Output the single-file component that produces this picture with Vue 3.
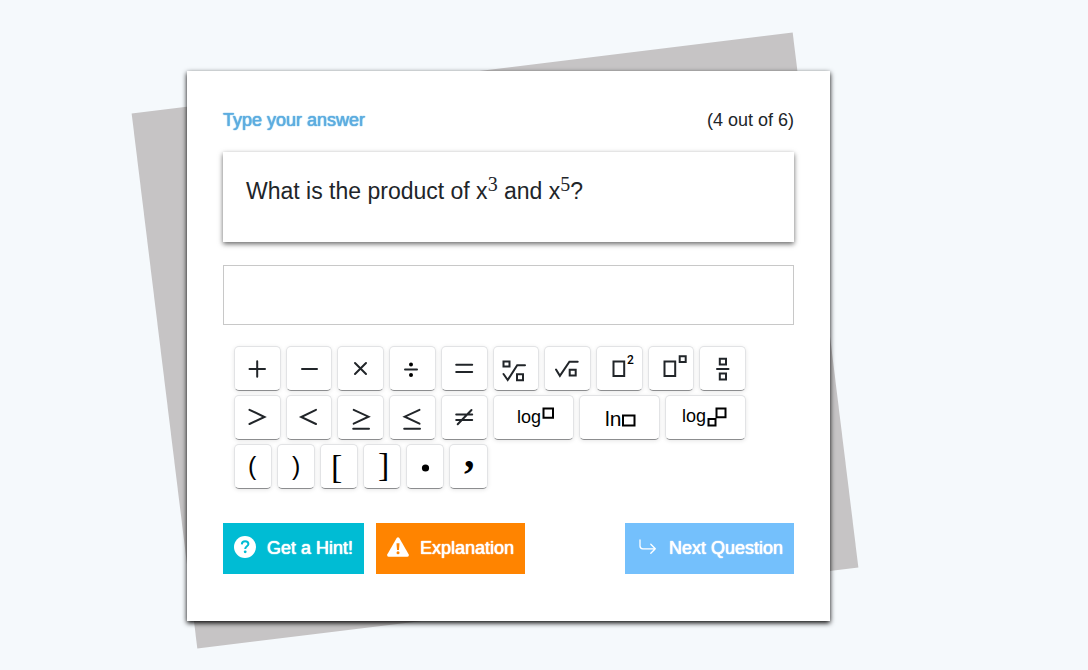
<template>
  <main class="page">
    <section class="card">
      <div class="sheet">
        <header class="head">
          <label for="answer" class="title">Type your answer</label>
          <span class="counter">(4 out of 6)</span>
        </header>

        <div class="question">
          What is the product of x<sup>3</sup> and x<sup>5</sup>?
        </div>

        <input id="answer" v-model="answer" class="answer" type="text" autocomplete="off" />

        <div class="keyboard">
          <div class="row" v-for="(row, index) in rows" :key="index">
            <button
              v-for="key in row"
              :key="key.name"
              type="button"
              class="key"
              :class="key.size"
              :aria-label="key.name"
              @click="answer += key.value"
            >
              <svg :width="widths[key.size]" height="44" :viewBox="`1 1 ${widths[key.size]} 44`">
                <path v-if="key.d" :d="key.d" />
                <circle v-for="(dot, i) in key.dots" :key="i" :cx="dot[0]" :cy="dot[1]" :r="dot[2]" />
                <text v-if="key.text" :x="key.x" :y="key.y" :class="key.font">{{ key.text }}</text>
              </svg>
            </button>
          </div>
        </div>

        <footer class="actions">
          <button type="button" class="btn hint">
            <svg width="22" height="22" viewBox="0 0 22 22">
              <circle cx="11" cy="11" r="11" fill="#fff" />
              <path d="M7.8 8.4C7.9 6.3 9.3 5.2 11.1 5.2C13.1 5.2 14.4 6.4 14.4 8C14.4 10.3 11.2 10.2 11.2 13" fill="none" stroke="#00bcd4" stroke-width="2" />
              <circle cx="11.2" cy="15.8" r="1.4" fill="#00bcd4" />
            </svg>
            <span>Get a Hint!</span>
          </button>
          <button type="button" class="btn explain">
            <svg width="22" height="22" viewBox="0 0 22 22">
              <path d="M9.7 2.1Q11 .3 12.3 2.1L21.6 18.3Q22.4 20.6 20.3 20.7H1.7Q-.4 20.6 .4 18.3Z" fill="#fff" />
              <path d="M9.5 7.3H12.5L12 14.1H10Z" fill="#ff8400" />
              <circle cx="11" cy="16.8" r="1.5" fill="#ff8400" />
            </svg>
            <span>Explanation</span>
          </button>
          <button type="button" class="btn next">
            <svg width="22" height="22" viewBox="0 0 22 22">
              <path d="M4 4V10Q4 12.8 6.8 12.8H19.3M14.8 8.3L19.3 12.8L14.8 17.3" fill="none" stroke="#fff" stroke-width="1.3" stroke-linecap="round" stroke-linejoin="round" />
            </svg>
            <span>Next Question</span>
          </button>
        </footer>
      </div>
    </section>
  </main>
</template>

<script setup>
import { ref } from "vue";

const answer = ref("");

const widths = { normal: 46, wide: 80, small: 38 };

const rows = [
  [
    { name: "plus", value: "+", size: "normal", d: "M16.5 23H32M24.2 15.3V30.7" },
    { name: "minus", value: "−", size: "normal", d: "M17 23H32" },
    { name: "times", value: "×", size: "normal", d: "M18 17L29 28M29 17L18 28" },
    { name: "divide", value: "÷", size: "normal", d: "M17 23.5H29", dots: [[23, 18.5, 2], [23, 29, 2]] },
    { name: "equals", value: "=", size: "normal", d: "M16.2 18.7H32.2M16.2 26.1H32.2" },
    { name: "nth root", value: "ⁿ√", size: "normal", d: "M11.5 15.5H17.5V20.5H11.5ZM11.5 28L15.7 34L25.2 19.3H33M25 28.3H31V34.3H25Z" },
    { name: "square root", value: "√", size: "normal", d: "M12 23.5L15.9 29.8L25.4 15.7H33.7M25.7 23.7H31.7V29.5H25.7Z" },
    { name: "square", value: "²", size: "normal", d: "M18.5 15.5H29.2V30H18.5Z", text: "2", x: 32, y: 17.5, font: "digit" },
    { name: "power", value: "^", size: "normal", d: "M17.5 15.5H28.2V30H17.5ZM32.7 10.2H38.7V16H32.7Z" },
    { name: "fraction", value: "/", size: "normal", d: "M20.8 12.7H27V18.5H20.8ZM18 23H29.5M20.8 27.5H27V33.4H20.8Z" },
  ],
  [
    { name: "greater than", value: ">", size: "normal", d: "M16.5 14.8L31.5 22L16.5 29" },
    { name: "less than", value: "<", size: "normal", d: "M31 14.8L16.2 22L31 29" },
    { name: "greater or equal", value: "≥", size: "normal", d: "M16.7 14.8L31.5 21.7L16.7 28.7M16.2 33.8H32" },
    { name: "less or equal", value: "≤", size: "normal", d: "M31.5 14.8L16.7 21.7L31.5 28.7M16.2 33.8H32" },
    { name: "not equal", value: "≠", size: "normal", d: "M16.2 19.5H32.2M16.2 25H32.2M17.7 29.2L31.5 15" },
    { name: "exponent log", value: "log", size: "wide", d: "M51.5 13.5H61V22.7H51.5Z", text: "log", x: 25, y: 28, font: "func" },
    { name: "natural log", value: "ln", size: "wide", d: "M45 20.5H56.5V30.5H45Z", text: "ln", x: 27, y: 31, font: "func large" },
    { name: "log with base", value: "log_", size: "wide", d: "M44.5 24H51.5V30.5H44.5ZM52.5 13.5H61.5V22.3H52.5Z", text: "log", x: 18, y: 27, font: "func" },
  ],
  [
    { name: "open parenthesis", value: "(", size: "small", text: "(", x: 15, y: 31, font: "paren" },
    { name: "close parenthesis", value: ")", size: "small", text: ")", x: 16, y: 31, font: "paren" },
    { name: "open bracket", value: "[", size: "small", text: "[", x: 12, y: 34, font: "bracket" },
    { name: "close bracket", value: "]", size: "small", text: "]", x: 16, y: 32, font: "bracket" },
    { name: "dot", value: "·", size: "small", dots: [[20.5, 24, 3.6]] },
    { name: "comma", value: ",", size: "small", text: ",", x: 16, y: 23, font: "comma" },
  ],
];
</script>

<style>
body {
  margin: 0;
  background: #f5f9fc;
}
</style>

<style scoped>
.page {
  box-sizing: border-box;
  min-height: 100vh;
  padding: 71px 258px 49px 187px;
  overflow: hidden;
  background: #f5f9fc;
  color: #212529;
  font-family: "Liberation Sans", Arial, sans-serif;
  font-size: 18px;
  line-height: 24px;
}

.card {
  position: relative;
  z-index: 0;
}

/* tilted sheet behind the card */
.card::before {
  content: "";
  position: absolute;
  z-index: -1;
  inset: 0 2px 11px -25px;
  background: #c6c4c5;
  transform: rotate(-7deg);
}

.sheet {
  padding: 36px 36px 47px;
  background: #fff;
  box-shadow: 0 2px 5px 0 #000;
}

.head {
  display: flex;
  justify-content: space-between;
  padding: 1px 0 20px;
}

.title {
  color: #5dade0;
  text-shadow: 0 0 1px #5dade0, 0 0 1px #5dade0;
}

.question {
  box-sizing: border-box;
  min-height: 90px;
  padding: 24px 23px;
  box-shadow: 0 2px 5px 0 rgba(0, 0, 0, 0.6);
  font-size: 23px;
  line-height: 30px;
}

.question sup {
  position: relative;
  top: -8px;
  font-family: "Liberation Serif", serif;
  font-size: 20px;
  line-height: 0;
  vertical-align: baseline;
}

.answer {
  box-sizing: border-box;
  display: block;
  width: 100%;
  height: 60px;
  margin: 23px 0 21px;
  padding: 0 16px;
  border: 1px solid #c8c8c8;
  background: #fff;
  color: inherit;
  font: inherit;
  outline: none;
}

.keyboard {
  display: grid;
  gap: 4px;
  max-width: 517px;
  margin-left: 11px;
}

.row {
  display: grid;
  grid-template-columns: repeat(60, 1fr);
}

.key {
  display: flex;
  justify-content: center;
  box-sizing: border-box;
  height: 45px;
  margin: 0 5px 0 0;
  padding: 0;
  border: 1px solid #e2e3e5;
  border-bottom-color: #8c8d8f;
  border-radius: 5px;
  background: #fff;
  box-shadow: 0 1px 4px rgba(0, 0, 0, 0.1);
  cursor: pointer;
}

.key.normal {
  grid-column: span 6;
}

.key.wide {
  grid-column: span 10;
}

.key.small {
  grid-column: span 5;
}

.key svg {
  flex: none;
  overflow: visible;
}

.key path {
  fill: none;
  stroke: #212529;
  stroke-width: 2;
  stroke-linecap: round;
}

.key.wide path {
  stroke: #000;
}

.digit {
  font: 500 12px Roboto, sans-serif;
}

.func {
  font: 18px "Liberation Sans", Arial, sans-serif;
}

.func.large {
  font-size: 21px;
}

.paren {
  font: 25px "Liberation Sans", Arial, sans-serif;
}

.bracket {
  font: 34px "Liberation Serif", serif;
}

.comma {
  font: bold 42px "Liberation Serif", serif;
}

.actions {
  display: flex;
  gap: 12px;
  margin-top: 34px;
}

.btn {
  display: flex;
  align-items: center;
  gap: 11px;
  height: 51px;
  padding: 0 11px 2px;
  border: 0;
  color: #fff;
  font: inherit;
  white-space: nowrap;
  text-shadow: 0 0 1px #fff, 0 0 1px #fff;
  cursor: pointer;
}

.btn svg {
  flex: none;
  margin-bottom: 2px;
  overflow: visible;
}

.hint {
  background: #00bcd4;
}

.explain {
  background: #ff8400;
}

.next {
  margin-left: auto;
  background: #74c0fc;
}
</style>
